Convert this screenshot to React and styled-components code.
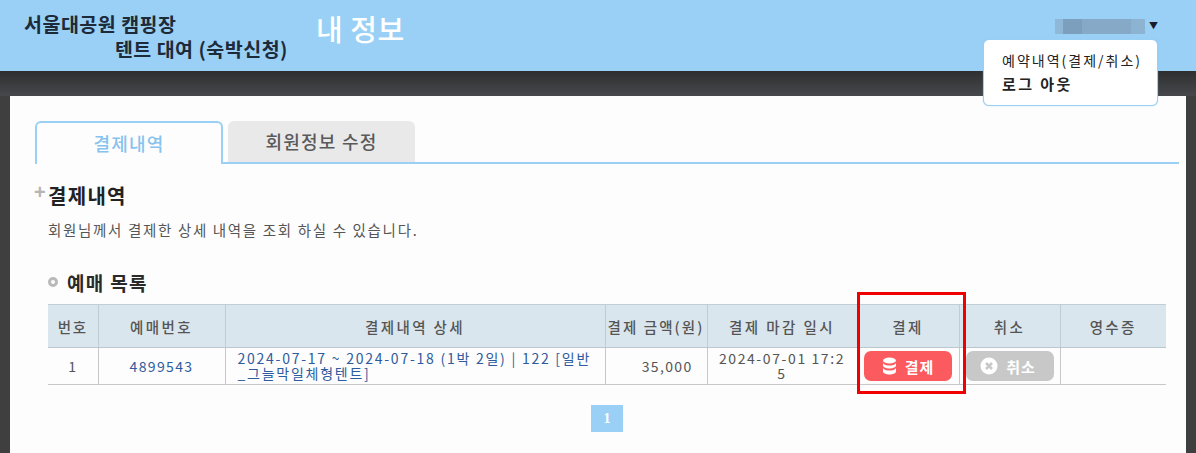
import React from "react";
import styled, { createGlobalStyle } from "styled-components";

const FONT = `"Noto Sans CJK KR", "Noto Sans", sans-serif`;

const GlobalStyle = createGlobalStyle`
  html, body {
    margin: 0;
    padding: 0;
    height: 453px;
    overflow: hidden;
    background: #3f3f40;
    font-family: ${FONT};
  }
`;

export default function App() {
  return (
    <Page>
      <GlobalStyle />
      <Header>
        <Logo>
          <LogoLine>서울대공원 캠핑장</LogoLine>
          <LogoLine $indent>텐트 대여 (숙박신청)</LogoLine>
        </Logo>
        <PageTitle>내 정보</PageTitle>
        <UserBox>
          <BlurredName />
          <Caret>▼</Caret>
        </UserBox>
        <UserMenu>
          <MenuItem>예약내역(결제/취소)</MenuItem>
          <MenuItem $bold>로그 아웃</MenuItem>
        </UserMenu>
      </Header>
      <Band />
      <Panel>
        <Tabs>
          <Tab $active>결제내역</Tab>
          <Tab>회원정보 수정</Tab>
        </Tabs>
        <SectionHead>
          <Plus>+</Plus>
          <SectionTitle>결제내역</SectionTitle>
        </SectionHead>
        <Description>회원님께서 결제한 상세 내역을 조회 하실 수 있습니다.</Description>
        <ListHead>
          <Ring />
          <ListTitle>예매 목록</ListTitle>
        </ListHead>
        <TableWrap>
          <Highlight />
          <Table>
            <colgroup>
              <col width="50" />
              <col width="127" />
              <col width="380" />
              <col width="102" />
              <col width="150" />
              <col width="102" />
              <col width="101" />
              <col width="106" />
            </colgroup>
            <thead>
              <tr>
                <Th>번호</Th>
                <Th>예매번호</Th>
                <Th>결제내역 상세</Th>
                <Th>결제 금액(원)</Th>
                <Th>결제 마감 일시</Th>
                <Th>결제</Th>
                <Th>취소</Th>
                <Th>영수증</Th>
              </tr>
            </thead>
            <tbody>
              <tr>
                <Td>1</Td>
                <Td><Link>4899543</Link></Td>
                <Td $left><DetailLink>2024-07-17 ~ 2024-07-18 (1박 2일) | 122 [일반_그늘막일체형텐트]</DetailLink></Td>
                <Td $right>35,000</Td>
                <Td><DateText>2024-07-01 17:25</DateText></Td>
                <Td>
                  <ActionButton $color="#fb5a5f">
                    <svg width="15" height="18" viewBox="0 0 15 18" fill="#fff">
                      <ellipse cx="7.500" cy="3.500" rx="6.500" ry="3" />
                      <path d="M1 6c1 1.800 3.600 2.600 6.500 2.600S13 7.800 14 6v2.500c0 1.600-3 3-6.500 3S1 10.100 1 8.500z" />
                      <path d="M1 11c1 1.800 3.600 2.600 6.500 2.600S13 12.800 14 11v3.500c0 1.600-3 3-6.500 3S1 16.100 1 14.500z" />
                    </svg>
                    결제
                  </ActionButton>
                </Td>
                <Td>
                  <ActionButton $color="#c8c8c8" $shift>
                    <svg width="18" height="18" viewBox="0 0 18 18">
                      <circle cx="9" cy="9" r="8.500" fill="#fff" />
                      <path d="M6 6l6 6M12 6l-6 6" stroke="#c8c8c8" strokeWidth="2.600" />
                    </svg>
                    취소
                  </ActionButton>
                </Td>
                <Td />
              </tr>
            </tbody>
          </Table>
        </TableWrap>
        <Pagination>
          <PageNumber>1</PageNumber>
        </Pagination>
      </Panel>
    </Page>
  );
}

const Page = styled.div`
  width: 1196px;
  height: 453px;
  overflow: hidden;
  background: #3f3f40;
`;

const Header = styled.header`
  position: relative;
  height: 71px;
  background: #9ad0f5;
  display: flex;
`;

const Logo = styled.div`
  width: 264px;
  margin-left: 24px;
  padding-top: 11px;
  font-size: 19.500px;
  line-height: 25px;
  font-weight: 700;
  letter-spacing: 0.5px;
  color: #1c2a3a;
`;

const LogoLine = styled.div`
  white-space: nowrap;
  text-align: ${(p) => (p.$indent ? "right" : "left")};
`;

const PageTitle = styled.h1`
  margin: 8px 0 0 28px;
  font-size: 29px;
  line-height: 40px;
  font-weight: 500;
  letter-spacing: 0.5px;
  color: #fff;
  white-space: nowrap;
`;

const UserBox = styled.div`
  margin: 19px 38px 0 auto;
  display: flex;
  align-items: flex-start;
`;

const BlurredName = styled.div`
  width: 90px;
  height: 15px;
  background: linear-gradient(90deg, #8fb8d8 0 9%, #7c9fbd 9% 30%, #85a9c7 30% 85%, #8cb3d2 85%);
`;

const Caret = styled.span`
  margin-left: 4px;
  font-size: 9px;
  line-height: 14px;
  color: #1a1a2a;
`;

const UserMenu = styled.div`
  position: absolute;
  z-index: 3;
  left: 983px;
  top: 39px;
  box-sizing: border-box;
  width: 175px;
  height: 67px;
  padding: 8px 18px;
  background: #fff;
  border: 1px solid #9ad0f5;
  border-radius: 6px;
  box-shadow: 0 0 1px #7fbde8;
`;

const MenuItem = styled.div`
  font-size: ${(p) => (p.$bold ? "15px" : "14px")};
  line-height: 24px;
  letter-spacing: ${(p) => (p.$bold ? "2.4px" : "2px")};
  font-weight: ${(p) => (p.$bold ? 700 : 400)};
  color: #222;
  white-space: nowrap;
`;

const Band = styled.div`
  height: 25px;
  background: linear-gradient(180deg, #2f2f30 0, #46484c 100%);
`;

const Panel = styled.main`
  box-sizing: border-box;
  width: 1176px;
  height: 357px;
  margin-left: 10px;
  padding: 25px 7px 0 25px;
  background: #fdfdfd;
`;

const Tabs = styled.div`
  display: flex;
  gap: 5px;
  height: 43px;
  border-bottom: 2px solid #9ad0f5;
  box-sizing: border-box;
`;

const Tab = styled.div`
  box-sizing: border-box;
  width: ${(p) => (p.$active ? "188px" : "187px")};
  height: ${(p) => (p.$active ? "43px" : "41px")};
  display: flex;
  align-items: center;
  justify-content: center;
  padding-bottom: 2px;
  border-radius: 6px 6px 0 0;
  font-size: 18px;
  font-weight: 500;
  letter-spacing: 1.200px;
  color: ${(p) => (p.$active ? "#86c3ee" : "#5a5a5a")};
  background: ${(p) => (p.$active ? "#fdfdfd" : "#e9e9e9")};
  border: ${(p) => (p.$active ? "2px solid #9ad0f5" : "none")};
  border-bottom: ${(p) => (p.$active ? "none" : "0")};
`;

const SectionHead = styled.div`
  position: relative;
  display: flex;
  align-items: center;
  margin: 18px 0 0 13px;
  height: 26px;
`;

const Plus = styled.span`
  position: absolute;
  left: -14px;
  top: 0;
  font-family: "Liberation Sans", sans-serif;
  font-size: 20px;
  line-height: 20px;
  font-weight: 700;
  color: #b5b5b5;
`;

const SectionTitle = styled.h2`
  margin: 0;
  font-size: 20px;
  font-weight: 700;
  letter-spacing: 1.300px;
  color: #222;
`;

const Description = styled.p`
  margin: 12px 0 0 13px;
  font-size: 14.500px;
  line-height: 20px;
  letter-spacing: 1.670px;
  color: #555;
  white-space: nowrap;
`;

const ListHead = styled.div`
  display: flex;
  align-items: center;
  gap: 9px;
  margin: 29px 0 0 13px;
  height: 26px;
`;

const Ring = styled.span`
  box-sizing: border-box;
  width: 10px;
  height: 10px;
  border-radius: 50%;
  border: 3px solid #b9b9b9;
`;

const ListTitle = styled.h3`
  margin: 0;
  font-size: 19px;
  font-weight: 700;
  letter-spacing: 1.300px;
  color: #2a2a2a;
`;

const TableWrap = styled.div`
  position: relative;
  margin: 9px 0 0 13px;
  width: 1118px;
`;

const Highlight = styled.div`
  position: absolute;
  z-index: 2;
  left: 809px;
  top: -12px;
  box-sizing: border-box;
  width: 109px;
  height: 102px;
  border: 3px solid #f00000;
  pointer-events: none;
`;

const Table = styled.table`
  width: 1118px;
  table-layout: fixed;
  border-collapse: collapse;
  border-top: 1px solid #c4ced6;
  border-bottom: 1px solid #c8c8c8;
`;

const Th = styled.th`
  height: 42px;
  padding: 0;
  background: #dae6ee;
  border-left: 1px solid #c2ccd4;
  border-bottom: 1px solid #bcc6ce;
  font-size: 14.500px;
  font-weight: 500;
  letter-spacing: 2.400px;
  color: #555;
  white-space: nowrap;
  &:first-child { border-left: none; letter-spacing: 1.600px; }
  &:nth-child(4) { letter-spacing: 2.100px; }
`;

const Td = styled.td`
  height: 36px;
  padding: ${(p) => (p.$left ? "0 9px 0 12px" : p.$right ? "0 14px 0 0" : "0 10px")};
  border-left: 1px solid #c8c8c8;
  font-size: 14px;
  line-height: 15px;
  letter-spacing: 1.350px;
  color: #555;
  text-align: ${(p) => (p.$left ? "left" : p.$right ? "right" : "center")};
  word-break: break-all;
  &:first-child { border-left: none; }
  &:nth-child(6), &:nth-child(7) { padding: 0; }
`;

const Link = styled.a`
  color: #2d5b9e;
`;

const DetailLink = styled(Link)`
  letter-spacing: 1.750px;
`;

const DateText = styled.span`
  letter-spacing: 1.600px;
`;

const ActionButton = styled.span`
  display: inline-flex;
  align-items: center;
  justify-content: center;
  gap: 8px;
  box-sizing: border-box;
  width: 88px;
  height: 30px;
  padding-right: ${(p) => (p.$shift ? "3px" : "0")};
  vertical-align: middle;
  border-radius: 7px;
  background: ${(p) => p.$color};
  color: #fff;
  font-size: 15px;
  font-weight: 700;
  letter-spacing: 1px;
`;

const Pagination = styled.div`
  display: flex;
  justify-content: center;
  margin-top: 20px;
  width: 1118px;
  margin-left: 13px;
`;

const PageNumber = styled.span`
  width: 32px;
  height: 27px;
  display: flex;
  align-items: center;
  justify-content: center;
  background: #9ad0f5;
  color: #fff;
  font-family: "Liberation Serif", serif;
  font-size: 14px;
  font-weight: 700;
`;
